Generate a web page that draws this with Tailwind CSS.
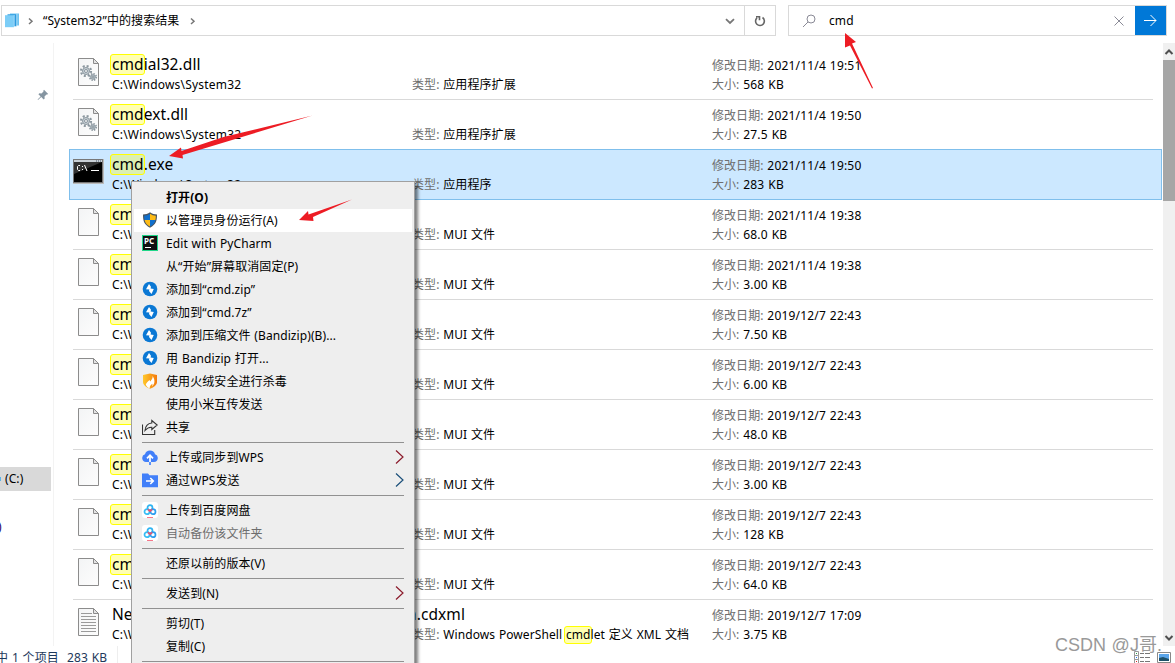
<!DOCTYPE html>
<html lang="zh-CN">
<head>
  <meta charset="UTF-8">
  <title>“System32”中的搜索结果</title>
  <script src="https://cdn.jsdelivr.net/npm/@tailwindcss/browser@4"></script>
  <meta name="viewport" content="width=device-width, initial-scale=1">
</head>
<body class="relative flex h-screen flex-col overflow-hidden bg-white font-['Noto_Sans','Noto_Sans_CJK_SC',sans-serif] text-[12px] leading-[20px] tracking-[0.08px] text-black [word-spacing:0.6px]">

  <!-- Icon sprite -->
  <svg class="absolute size-0">
    <linearGradient id="paper" x1="0" y1="0" x2="1" y2="1">
      <stop offset="0" stop-color="#f3f4f5"/><stop offset="1" stop-color="#fdfdfd"/>
    </linearGradient>
    <linearGradient id="flame" x1="0" y1="0" x2="1" y2="0">
      <stop offset="0" stop-color="#ffc82c"/><stop offset="1" stop-color="#f47a0c"/>
    </linearGradient>
    <symbol id="file" viewBox="0 0 32 32">
      <path d="M5.500 2.500h15l5 5v22h-20z" fill="url(#paper)" stroke="#8c8c8c"/>
      <path d="M20.500 2.500v5h5z" fill="#e4e4e4" stroke="#8c8c8c" stroke-linejoin="round"/>
    </symbol>
    <symbol id="dll" viewBox="0 0 32 32">
      <use href="#file"/>
      <g fill="none" stroke="#8b979f">
        <circle cx="13" cy="15" r="5" stroke-width="2.200" stroke-dasharray="2 1.930"/>
        <circle cx="13" cy="15" r="3.500" fill="#c7d0d6"/>
        <circle cx="13" cy="15" r="1.500" fill="#f4f4f4"/>
        <circle cx="20" cy="21" r="3.300" stroke-width="1.500" stroke-dasharray="1.500 1.090"/>
        <circle cx="20" cy="21" r="2.300" fill="#b4bfc6"/>
        <circle cx="20" cy="21" r=".8" fill="#f4f4f4"/>
      </g>
    </symbol>
    <symbol id="text" viewBox="0 0 32 32">
      <use href="#file"/>
      <path d="M8 7.500h11M8 10.500h15M8 13.500h15M8 16.500h15M8 19.500h15M8 22.500h15M8 25.500h15" stroke="#9a9a9a"/>
    </symbol>
    <symbol id="console" viewBox="0 0 32 32">
      <path d="M0 3h31v25H0z" fill="#bbb"/>
      <path d="M.5 3.500h29v23H.5z" fill="#000" stroke="#777"/>
      <path d="M1 4h28v2H1z" fill="#c9d0d6"/>
      <path d="M23 5h1m1 0h1m1 0h1" stroke="#456"/>
      <path d="M1 6h28L1 18z" fill="#333"/>
      <path d="M7 9.500H5.500l-1 1v3l1 1H7M9.500 10v1m0 2v1M11.500 9l2.500 6M18 14.500h8" fill="none" stroke="#fff"/>
    </symbol>
    <symbol id="shield" viewBox="0 0 16 16">
      <path d="M8 .3C6 1.800 3.500 2.500 1 2.600c0 6 .8 10 7 13.100 6.200-3.100 7-7.100 7-13.100C12.500 2.500 10 1.800 8 .3z" fill="#4a5560"/>
      <path d="M8 1.700C6.300 2.900 4.300 3.500 2.200 3.700c0 1.500 0 3 .4 4.300H8z" fill="#0f6fcc"/>
      <path d="M8 1.700c1.700 1.200 3.700 1.800 5.800 2 0 1.500 0 3-.4 4.300H8z" fill="#fdbb16"/>
      <path d="M8 8H2.600c.6 2.900 2.100 4.900 5.400 6.500z" fill="#fdbb16"/>
      <path d="M8 8h5.400c-.6 2.900-2.100 4.900-5.400 6.500z" fill="#0f6fcc"/>
    </symbol>
    <symbol id="bandizip" viewBox="0 0 16 16">
      <circle cx="8" cy="8" r="7.300" fill="#0b78d4"/>
      <path d="M7 3 4 8.200l3.400.4-.4 1.500L9.500 13l2.300-5-3.200-.6.400-1.700z" fill="#fff"/>
    </symbol>
    <symbol id="huorong" viewBox="0 0 16 16">
      <path d="M1 2l7-1.500L15 2v7c0 3.500-4 5.500-7 6.700C5 14.500 1 12.500 1 9z" fill="url(#flame)"/>
      <path d="M10.500 3c.5 3-1.500 3.800-2 5.500-.6-.3-.8-.8-.8-1.400C6 8.500 4 10 3.800 11.800 4.500 13.800 6.500 15 8 15.500c-1-2.300 1-3.300 2.200-4.800.4.800.2 1.700-.2 2.700 3.500-2.800 2.800-7.400.5-10.400z" fill="#fff"/>
    </symbol>
    <symbol id="share" viewBox="0 0 16 16">
      <path d="M.5 5.500v10h12.200V11M9.800 1.500l5.400 4.500-5.400 4.500V8.200C7 8 5 9 3 11.500 3.500 7 6 4.200 9.800 4z" fill="none" stroke="#333" stroke-width="1.100"/>
    </symbol>
    <symbol id="cloud" viewBox="0 0 16 16">
      <path d="M4 13a4 4 0 0 1-1-7.800 5.200 5.200 0 0 1 10 0A4 4 0 0 1 12 13z" fill="#417ff9"/>
      <path d="M8 13V6.500M5 9.300l3-3 3 3" fill="none" stroke="#fff" stroke-width="1.700"/>
      <path d="M8 13v3" stroke="#417ff9" stroke-width="1.700"/>
    </symbol>
    <symbol id="folder" viewBox="0 0 16 16">
      <path d="M0 1.500h6l1.500 1.700H16v12H0z" fill="#417ff9"/>
      <path d="M4 9h7M8.300 6l3 3-3 3" fill="none" stroke="#fff" stroke-width="1.600"/>
    </symbol>
    <symbol id="baidu" viewBox="0 0 16 16">
      <rect width="16" height="16" rx="3" fill="#fff"/>
      <g fill="none" stroke-width="1.700">
        <circle cx="8" cy="5.700" r="2.500" stroke="#2fb4f2"/>
        <circle cx="5" cy="9.700" r="2.500" stroke="#36bdf4"/>
        <circle cx="11" cy="9.700" r="2.500" stroke="#2b9df0"/>
        <path d="M6 7.300c.6.800 1.200 1 2 1.800.800-.800 1.400-1 2-1.800" stroke="#f2506a"/>
      </g>
      <path d="M5 15.500h6" stroke="#f5788a"/>
    </symbol>
  </svg>

  <!-- Address bar and search -->
  <header class="flex h-[43px] shrink-0 items-start pt-[5px] pl-px">
    <div class="flex h-[31px] w-[775px] items-center border border-[#d9d9d9]">
      <svg class="ml-[2px] size-[16px]" viewBox="0 0 16 16">
        <path d="M6 .5h9v12H6z" fill="#6fc3f0"/><path d="M3.500 1.300h9v12h-9z" fill="#2b9be0"/>
        <path d="M1 2.200h9v12H1z" fill="#7ccdf7"/><path d="M10.300 2v12M12.800 1v12" stroke="#d6f0fd" stroke-width=".6"/>
      </svg>
      <svg class="ml-[7px] size-[8px]" viewBox="0 0 8 8"><path d="M2 1.500 5 4.300 2 7" fill="none" stroke="#777" stroke-width="1.500"/></svg>
      <span class="ml-[8px] w-[139px] whitespace-nowrap">“System32”中的搜索结果</span>
      <svg class="ml-[7px] size-[8px]" viewBox="0 0 8 8"><path d="M2 1.500 5 4.300 2 7" fill="none" stroke="#777" stroke-width="1.500"/></svg>
      <svg class="ml-auto mr-[9px] size-[10px]" viewBox="0 0 10 10"><path d="M1 3.200 5 7l4-3.800" fill="none" stroke="#777" stroke-width="1.800"/></svg>
      <div class="flex h-full w-[31px] items-center justify-center border-l border-[#d9d9d9]">
        <svg class="size-[12px]" viewBox="0 0 12 12"><path d="M3 2.800A4.400 4.400 0 1 0 8.500 2.500M2 1.800h3.500v3.500" fill="none" stroke="#666" stroke-width="1.600"/></svg>
      </div>
    </div>
    <div class="ml-[12px] flex h-[31px] w-[379px] items-center border border-[#d9d9d9]">
      <svg class="ml-[13px] size-[14px]" viewBox="0 0 14 14"><circle cx="9" cy="5" r="4" fill="none" stroke="#8a8a96"/><path d="M6 8 1 13" stroke="#8a8a96"/></svg>
      <span class="ml-[13px]">cmd</span>
      <svg class="ml-auto mr-[11px] size-[10px]" viewBox="0 0 10 10"><path d="M.5.5l9 9M9.500.5l-9 9" stroke="#8a8a96"/></svg>
      <div class="flex h-[29px] w-[31px] items-center justify-center bg-[#0078d7]">
        <svg class="size-[13px]" viewBox="0 0 13 13"><path d="M0 6.500h12M6.500 1 12 6.500 6.500 12" fill="none" stroke="#fff"/></svg>
      </div>
    </div>
  </header>

  <main class="flex h-[603px] shrink-0">
    <!-- Navigation pane -->
    <nav class="flex w-[54px] shrink-0 flex-col overflow-hidden border-r border-[#f3f3f3]">
      <svg class="mt-[46px] ml-[37px] size-[12px] shrink-0" viewBox="0 0 12 12"><path d="M7 .8 11.200 5l-1 .6-.7-.2-2 2 .2 2.100-1 1L4.200 8 1 11l-.4-.4 3-3.200L1.400 5.300l1-1 2.100.2 2-2-.2-.7z" fill="#8595a1"/></svg>
      <div class="mt-[366px] flex h-[24px] w-[51px] shrink-0 items-center bg-[#d9d9d9]"><span class="mr-[4px] h-[4px] w-px bg-[#5ab4e8]"></span>(C:)</div>
      <div class="mt-[26px] -ml-[2px] text-[#206]">)</div>
    </nav>

    <div id="list" class="h-[603px] w-[1109px] overflow-hidden pt-[7px]"></div>

    <!-- Scrollbar -->
    <div class="flex w-[12px] flex-col items-center bg-[#f0f0f0]">
      <svg class="h-[17px] w-[10px] shrink-0" viewBox="0 0 10 17"><path d="M1.500 11 5 7.500 8.500 11" fill="none" stroke="#505050" stroke-width="2"/></svg>
      <div class="h-[141px] w-full bg-[#a6a6a6]"></div>
      <svg class="mt-auto h-[17px] w-[10px]" viewBox="0 0 10 17"><path d="M1.500 7 5 10.500 8.500 7" fill="none" stroke="#505050" stroke-width="2"/></svg>
    </div>
  </main>

  <!-- Status bar -->
  <footer class="flex h-[17px] shrink-0 items-center text-[#1e395b]">
    <span class="-ml-[4px] w-[71px] whitespace-nowrap pt-[7px]">中 1 个项目</span>
    <span class="pt-[7px] whitespace-nowrap">283 KB</span>
    <span class="ml-[10px] h-full border-l border-[#eee]"></span>
    <svg class="mt-[6px] mr-[4px] ml-auto h-[14px] w-[37px]" viewBox="0 0 37 14">
      <path d="M.5.5h4v4h-4zM.5 4.500h4v4h-4zM.5 8.500h4v4h-4z" fill="#fff" stroke="#999"/>
      <path d="M2 2.500h1" stroke="#2a9d4b"/><path d="M2 6.500h1" stroke="#27f"/><path d="M2 10.500h1" stroke="#d22"/>
      <path d="M6 2.500h4m1 0h5M6 6.500h4m1 0h5M6 10.500h4m1 0h5" stroke="#777"/>
      <path d="M23.500 1.500h13v10h-13z" fill="#fff" stroke="#888"/>
      <path d="M25 3h10v7H25z" fill="#5aa5ea"/><path d="M25 7l4-1 6 2v2H25z" fill="#1d5068"/>
    </svg>
  </footer>

  <!-- Context menu -->
  <div id="menu" class="absolute top-[181px] left-[131px] w-[284px] border border-[#a0a0a0] bg-[#eee] px-[2px] pt-[4px] pb-[8px] shadow-[3px_3px_3px_rgba(0,0,0,0.5)]"></div>

  <!-- Pointer arrows -->
  <svg class="pointer-events-none absolute inset-0 h-[663px] w-[1175px]" viewBox="0 0 1175 663" fill="#ed1c24">
    <path d="M845 33l11 9-4 1.500 21 44.500-1 .5-22-43-5 2z"/>
    <path d="M312.500 115.500 182.500 155l.5 3.500-14-2.500 12-8.500.5 3.500 42-14z"/>
    <path d="M352 199.500 313 217l.5 4-14.500-1 9-9 .5 3.500z"/>
  </svg>

  <!-- Watermark -->
  <div class="absolute top-[633px] left-[1055px] whitespace-nowrap font-['Liberation_Sans','Noto_Sans_CJK_SC',sans-serif] text-[18px] leading-[24px] tracking-normal text-[#999]">CSDN @J哥.</div>

  <script>
    const mark = 'rounded-[3px] border border-[#ffff00] bg-[#ffff00]/30 pl-px';

    // icon, name after the "cmd" match, type, date, size
    const files = [
      ['dll', 'ial32.dll', '应用程序扩展', '2021/11/4 19:51', '568 KB'],
      ['dll', 'ext.dll', '应用程序扩展', '2021/11/4 19:50', '27.5 KB'],
      ['console', '.exe', '应用程序', '2021/11/4 19:50', '283 KB'],
      ['file', '.exe.mui', 'MUI 文件', '2021/11/4 19:38', '68.0 KB'],
      ['file', 'ial32.dll.mui', 'MUI 文件', '2021/11/4 19:38', '3.00 KB'],
      ['file', 'ial32.dll.mui', 'MUI 文件', '2019/12/7 22:43', '7.50 KB'],
      ['file', 'key.exe.mui', 'MUI 文件', '2019/12/7 22:43', '6.00 KB'],
      ['file', '.exe.mui', 'MUI 文件', '2019/12/7 22:43', '48.0 KB'],
      ['file', 'ext.dll.mui', 'MUI 文件', '2019/12/7 22:43', '3.00 KB'],
      ['file', 'l32.exe.mui', 'MUI 文件', '2019/12/7 22:43', '128 KB'],
      ['file', 'key.exe.mui', 'MUI 文件', '2019/12/7 22:43', '64.0 KB'],
      ['text', null, `Windows PowerShell <span class="${mark} -ml-[2px] -mr-px inline-block h-[18px] leading-[16px]">cmd</span>let 定义 XML 文档`, '2019/12/7 17:09', '3.75 KB'],
    ];

    document.getElementById('list').innerHTML = files.map(([icon, name, type, date, size]) => {
      const row = icon === 'console'
        ? 'relative z-0 -mt-px ml-[15px] h-[51px] w-[1093px] border border-[#7fbfec] bg-[#cce8ff] pl-[3px]'
        : 'ml-[19px] h-[50px] w-[1080px] border-b border-[#d9d9d9]';
      const title = name === null
        ? '<span class="flex w-[353px] shrink-0 justify-between"><span>Ne</span><span>n.cdxml</span></span>'
        : `<span class="${mark} -ml-[2px] -mr-px h-[21px] leading-[19px]">cmd</span>${name}`;
      return `
        <div class="flex ${row}">
          <svg class="mt-[6px] size-[32px] shrink-0"><use href="#${icon}"/></svg>
          <div class="ml-[7px] w-[300px] shrink-0 whitespace-nowrap pt-[3px]">
            <div class="flex h-[22px] items-center text-[15.5px]">${title}</div>
            <div class="tracking-[0.2px]">C:\\Windows\\System32</div>
          </div>
          <div class="w-[300px] shrink-0 whitespace-nowrap pt-[25px]"><span class="text-[#6d6d6d]">类型:</span> ${type}</div>
          <div class="whitespace-nowrap pt-[6px] leading-[19px] tracking-[0.18px]">
            <div><span class="text-[#6d6d6d] tracking-[0.05px]">修改日期:</span> ${date}</div>
            <div><span class="text-[#6d6d6d] tracking-[0.05px]">大小:</span> ${size}</div>
          </div>
        </div>`;
    }).join('');

    // null draws a separator
    const items = [
      { text: '打开(O)', style: 'font-bold' },
      { text: '以管理员身份运行(A)', icon: 'shield', style: 'bg-white' },
      { text: 'Edit with PyCharm', icon: 'pycharm' },
      { text: '从“开始”屏幕取消固定(P)' },
      { text: '添加到“cmd.zip”', icon: 'bandizip' },
      { text: '添加到“cmd.7z”', icon: 'bandizip' },
      { text: '添加到压缩文件 (Bandizip)(B)...', icon: 'bandizip' },
      { text: '用 Bandizip 打开...', icon: 'bandizip' },
      { text: '使用火绒安全进行杀毒', icon: 'huorong' },
      { text: '使用小米互传发送' },
      { text: '共享', icon: 'share' },
      null,
      { text: '上传或同步到WPS', icon: 'cloud', arrow: '#8b1a2b' },
      { text: '通过WPS发送', icon: 'folder', arrow: '#1a4f7a' },
      null,
      { text: '上传到百度网盘', icon: 'baidu' },
      { text: '自动备份该文件夹', icon: 'baidu', style: 'text-[#6d6d6d]' },
      null,
      { text: '还原以前的版本(V)' },
      null,
      { text: '发送到(N)', arrow: '#8b1a2b' },
      null,
      { text: '剪切(T)' },
      { text: '复制(C)' },
      null,
    ];

    const menuIcon = name => name === 'pycharm'
      ? '<span class="relative mb-px size-[16px] border border-[#21d789] bg-[#111] pl-[1px] font-[\'Liberation_Sans\'] text-[8px] leading-[9px] font-bold text-white">PC<span class="absolute bottom-[2px] left-[2px] h-px w-[6px] bg-white"></span></span>'
      : `<svg class="mb-px size-[16px]">${name ? `<use href="#${name}"/>` : ''}</svg>`;

    document.getElementById('menu').innerHTML = items.map(item => item === null
      ? '<div class="mx-[8px] flex h-[7px] items-center"><div class="h-px w-full bg-[#919191]"></div></div>'
      : `<div class="flex h-[23px] items-center whitespace-nowrap px-[8px] ${item.style || ''}">
          ${menuIcon(item.icon)}
          <span class="ml-[8px]">${item.text}</span>
          ${item.arrow ? `<svg class="mb-[2px] ml-auto h-[14px] w-[9px]" viewBox="0 0 9 14"><path d="M1 .5 8 7l-7 6.500" fill="none" stroke="${item.arrow}" stroke-width="1.200"/></svg>` : ''}
        </div>`).join('');
  </script>
</body>
</html>
